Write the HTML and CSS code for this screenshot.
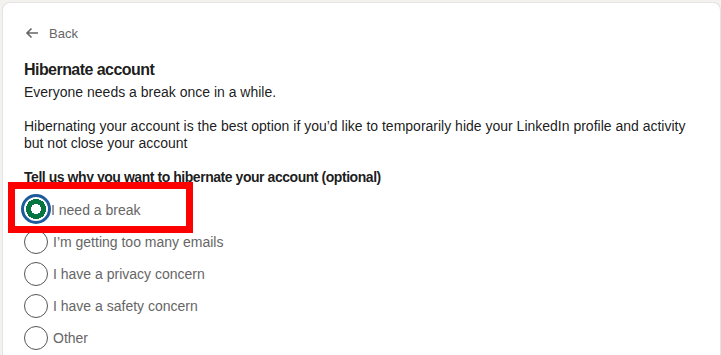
FILE: index.html
```html
<!DOCTYPE html>
<html>
<head>
<meta charset="utf-8">
<link rel="stylesheet" href="styles.css">
</head>
<body>
<div class="card">
  <a class="back">
    <svg class="back-icon" width="16" height="16" viewBox="0 0 16 16"><path d="M14 8H3M7.5 3.5L3 8l4.5 4.5" fill="none" stroke="#666" stroke-width="1.6"/></svg>
    <span>Back</span>
  </a>
  <h1 class="title">Hibernate account</h1>
  <p class="sub">Everyone needs a break once in a while.</p>
  <p class="desc">Hibernating your account is the best option if you’d like to temporarily hide your LinkedIn profile and activity but not close your account</p>
  <p class="question">Tell us why you want to hibernate your account (optional)</p>
  <div class="options">
    <div class="highlight"></div>
    <label class="opt"><span class="radio checked"></span><span class="label">I need a break</span></label>
    <label class="opt"><span class="radio"></span><span class="label">I’m getting too many emails</span></label>
    <label class="opt"><span class="radio"></span><span class="label">I have a privacy concern</span></label>
    <label class="opt"><span class="radio"></span><span class="label">I have a safety concern</span></label>
    <label class="opt"><span class="radio"></span><span class="label">Other</span></label>
  </div>
</div>
</body>
</html>
```
FILE: styles.css
```css
html, body { margin: 0; padding: 0; }
body {
  background: #f3f2ef;
  font-family: "Liberation Sans", Arial, sans-serif;
  color: rgba(0,0,0,0.9);
  height: 355px;
  overflow: hidden;
}
.card {
  box-sizing: border-box;
  margin: 2px 0 0 2px;
  background: #fff;
  border: 1px solid #e4e4e4;
  border-bottom: none;
  border-radius: 8px 8px 0 0;
  padding: 21px 21px 0 21px;
  height: 353px;
  overflow: hidden;
}
.back {
  display: flex;
  align-items: center;
  gap: 9px;
  color: #666;
  font-size: 13px;
  height: 18px;
}
.back-icon { display: block; }
.title {
  margin: 18px 0 0 0;
  font-size: 16px;
  font-weight: 700;
  letter-spacing: -0.55px;
  line-height: 20px;
}
.sub {
  margin: 3px 0 0 0;
  font-size: 14px;
  line-height: 18px;
}
.desc {
  margin: 17px 0 0 0;
  font-size: 14px;
  line-height: 17px;
}
.question {
  margin: 16px 0 0 0;
  font-size: 14px;
  font-weight: 700;
  letter-spacing: -0.45px;
  line-height: 18px;
}
.options {
  position: relative;
  margin-top: 12px;
  display: flex;
  flex-direction: column;
  gap: 8px;
}
.opt {
  display: flex;
  align-items: center;
  height: 24px;
  font-size: 14px;
  color: #666;
}
.radio {
  box-sizing: border-box;
  width: 24px;
  height: 24px;
  border-radius: 50%;
  border: 1.5px solid #555;
  margin-right: 5px;
  flex: none;
}
.radio.checked {
  width: 30px;
  height: 30px;
  margin: -3px 0 0 -3px;
  border: 3px solid #1c5c9c;
  background: radial-gradient(circle, #fff 0 5px, #057642 5px 10px, #fff 10px);
}
.highlight {
  position: absolute;
  left: -16px;
  top: -16px;
  width: 171px;
  height: 37px;
  border: 7px solid #ff0000;
}
```
